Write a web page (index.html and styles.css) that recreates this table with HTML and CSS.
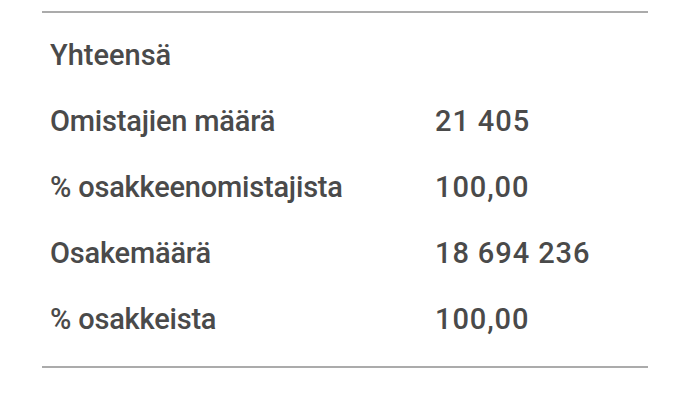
FILE: index.html
```html
<!DOCTYPE html>
<html lang="fi">
<head>
<meta charset="utf-8">
<link rel="stylesheet" href="styles.css">
</head>
<body>
<div class="wrap">
  <table class="totals">
    <tbody>
      <tr><th colspan="2">Yhteensä</th></tr>
      <tr><td class="label">Omistajien määrä</td><td class="value">21 405</td></tr>
      <tr><td class="label">% osakkeenomistajista</td><td class="value">100,00</td></tr>
      <tr><td class="label">Osakemäärä</td><td class="value">18 694 236</td></tr>
      <tr><td class="label">% osakkeista</td><td class="value">100,00</td></tr>
    </tbody>
  </table>
</div>
</body>
</html>
```
FILE: styles.css
```css
html, body {
  margin: 0;
  padding: 0;
  background: #ffffff;
}
.wrap {
  padding: 11px 42px 0 42px;
}
.totals {
  width: 606px;
  border-collapse: collapse;
  border-top: 2px solid #ababab;
  border-bottom: 2px solid #ababab;
  font-family: Roboto, "Liberation Sans", sans-serif;
  font-weight: 500;
  font-size: 29px;
  color: #4a4a4a;
}
.totals tbody::before {
  content: "";
  display: table-row;
  height: 10px;
}
.totals tbody::after {
  content: "";
  display: table-row;
  height: 15px;
}
.totals th,
.totals td {
  height: 66px;
  padding: 0 0 0 8px;
  text-align: left;
  vertical-align: middle;
  font-weight: 500;
}
.label {
  width: 377px;
  letter-spacing: -0.2px;
}
.value {
  letter-spacing: 0.9px;
}
```
